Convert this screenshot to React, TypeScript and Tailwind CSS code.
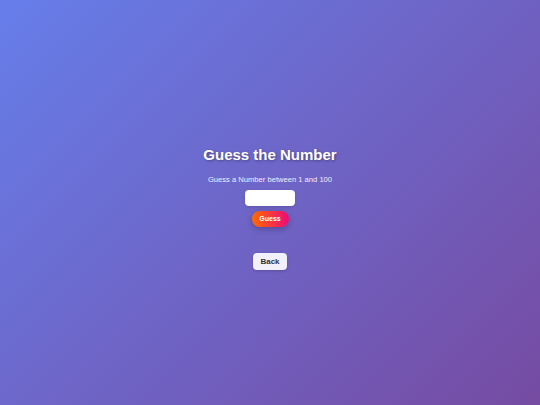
import React from "react";

export default function App() {
  return (
    <div
      className="w-[540px] h-[405px] flex flex-col items-center justify-center bg-[linear-gradient(135deg,#667eea_0%,#764ba2_100%)] text-white"
      style={{ fontFamily: "'Liberation Sans', Arial, sans-serif" }}
    >
      <h1 className="text-[15px] font-bold leading-[20px] [text-shadow:1px_1px_3px_rgba(0,0,0,0.35)] mt-[10px]">
        Guess the Number
      </h1>
      <p className="text-[7.6px] leading-[10px] mt-[10px] text-[#f0eefa]">Guess a Number between 1 and 100</p>
      <input
        type="text"
        className="mt-[5px] w-[50px] h-[16px] rounded-[4px] bg-white outline-none border-0 shadow-[0_1px_3px_rgba(0,0,0,0.15)]"
      />
      <button className="mt-[5px] w-[37px] h-[16px] rounded-full text-[7px] font-bold text-white bg-[linear-gradient(90deg,#ff6a00,#ee0979)] shadow-[0_2px_6px_rgba(0,0,0,0.25)]">
        Guess
      </button>
      <button className="mt-[26px] w-[34px] h-[17px] rounded-[4px] text-[8px] font-bold text-[#333] bg-[#f2f0fa] shadow-[0_1px_3px_rgba(0,0,0,0.2)]">
        Back
      </button>
    </div>
  );
}
